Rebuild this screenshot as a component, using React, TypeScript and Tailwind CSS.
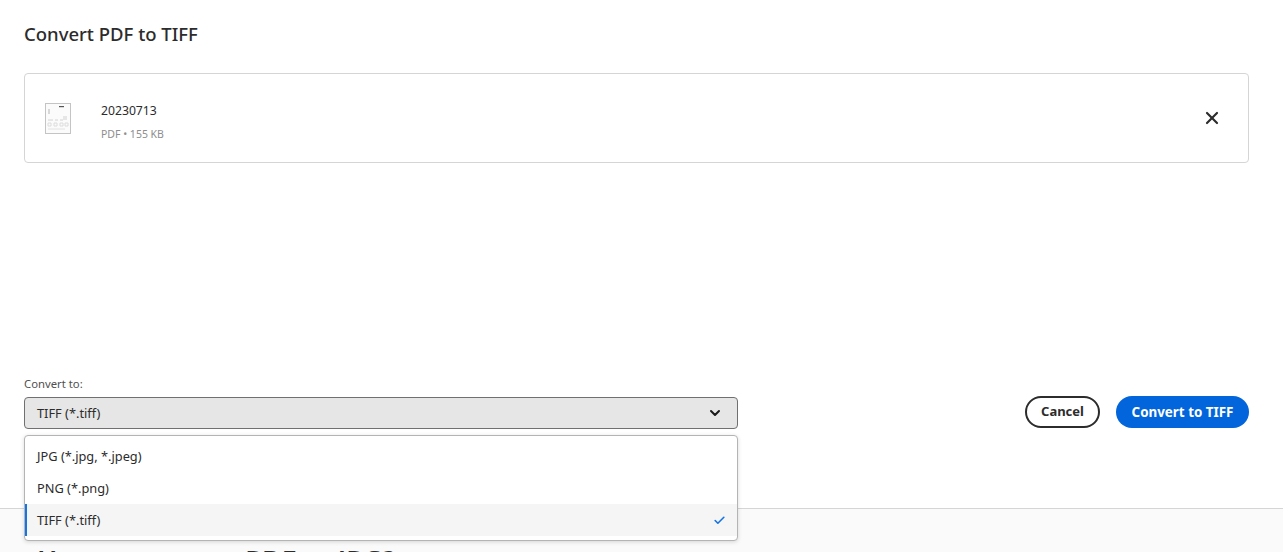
import { Check, ChevronDown, X } from "lucide-react";

const formats = ["JPG (*.jpg, *.jpeg)", "PNG (*.png)", "TIFF (*.tiff)"];

function PdfThumb() {
  return (
    <svg width="26" height="31" viewBox="0 0 26 31" className="shrink-0">
      <rect x="0.5" y="0.5" width="25" height="30" fill="#fbfbfb" stroke="#c4c4c4" />
      <rect x="14" y="3" width="5" height="1.2" fill="#555" />
      <rect x="3" y="6" width="2" height="5" fill="#d8d8d8" />
      <path d="M18 13h4v4h-4z" fill="#e6e6e6" />
      <path d="M3 17h5M10 17h3M15 17h3" stroke="#d2d2d2" />
      <path d="M3 20h3v3H3zM9 20h3v3H9zM15 20h3v3h-3zM20 20h3v3h-3z" fill="none" stroke="#dcdcdc" />
      <path d="M3 26h17" stroke="#e2e2e2" />
    </svg>
  );
}

export default function App() {
  return (
    <div className="h-[552px] overflow-hidden bg-white font-['Noto_Sans','Open_Sans',sans-serif] text-[#2c2c2c]">
      <main className="flex h-[508px] flex-col px-[24px] pr-[34px] pb-[79px] pt-[22px]">
        <h1 className="text-[18.5px] leading-[24px] font-medium">Convert PDF to TIFF</h1>

        <div className="mt-[27px] flex h-[90px] items-center justify-between rounded-[4px] border border-[#d5d5d5] pl-[20px] pr-[26px]">
          <div className="flex items-center gap-[30px]">
            <PdfThumb />
            <div className="mt-[7px]">
              <div className="text-[12.2px] leading-[16px]">20230713</div>
              <div className="mt-[8px] text-[10.5px] leading-[14px] text-[#8e8e8e]">PDF • 155 KB</div>
            </div>
          </div>
          <X size={20} strokeWidth={2.6} />
        </div>

        <div className="mt-auto flex items-end justify-between">
          <div className="relative w-[714px]">
            <label className="mb-[7px] block text-[11.3px] leading-[13px] text-[#505050]">Convert to:</label>
            <div className="flex h-[32px] items-center justify-between rounded-[4px] border border-[#707070] bg-[#e6e6e6] pl-[12px] pr-[14px] text-[12.8px]">
              <span className="pt-[1px]">TIFF (*.tiff)</span>
              <ChevronDown size={16} strokeWidth={3} className="text-[#1a1a1a]" />
            </div>
            <ul className="absolute left-0 right-0 top-[58px] z-10 rounded-[4px] border border-[#b4b4b4] bg-white py-[4px] text-[12.8px] shadow-[0_1px_4px_rgba(0,0,0,0.15)]">
              {formats.map((f) => {
                const selected = f === "TIFF (*.tiff)";
                return (
                  <li
                    key={f}
                    className={
                      selected
                        ? "flex h-[32px] items-center justify-between border-l-[2px] border-[#1473e6] bg-[#f5f5f5] pl-[10px] pr-[11px]"
                        : "flex h-[32px] items-center justify-between pl-[12px] pr-[11px]"
                    }
                  >
                    <span className="pt-[2px]">{f}</span>
                    {selected && <Check size={13} strokeWidth={3} className="text-[#1473e6]" />}
                  </li>
                );
              })}
            </ul>
          </div>

          <div className="flex items-center gap-[16px] pb-[1px]">
            <button className="h-[32px] w-[75px] rounded-full border-2 border-[#2c2c2c] text-[13px] font-bold">
              Cancel
            </button>
            <button className="h-[32px] w-[133px] rounded-full bg-[#0265dc] text-[13.4px] font-bold text-white">
              Convert to TIFF
            </button>
          </div>
        </div>
      </main>

      <section className="h-[44px] overflow-hidden border-t border-[#d5d5d5] bg-[#fafafa] pl-[37px] pt-[33px]">
        <h2 className="text-[27px] leading-[36px] font-semibold">How to convert PDF to JPG?</h2>
      </section>
    </div>
  );
}
